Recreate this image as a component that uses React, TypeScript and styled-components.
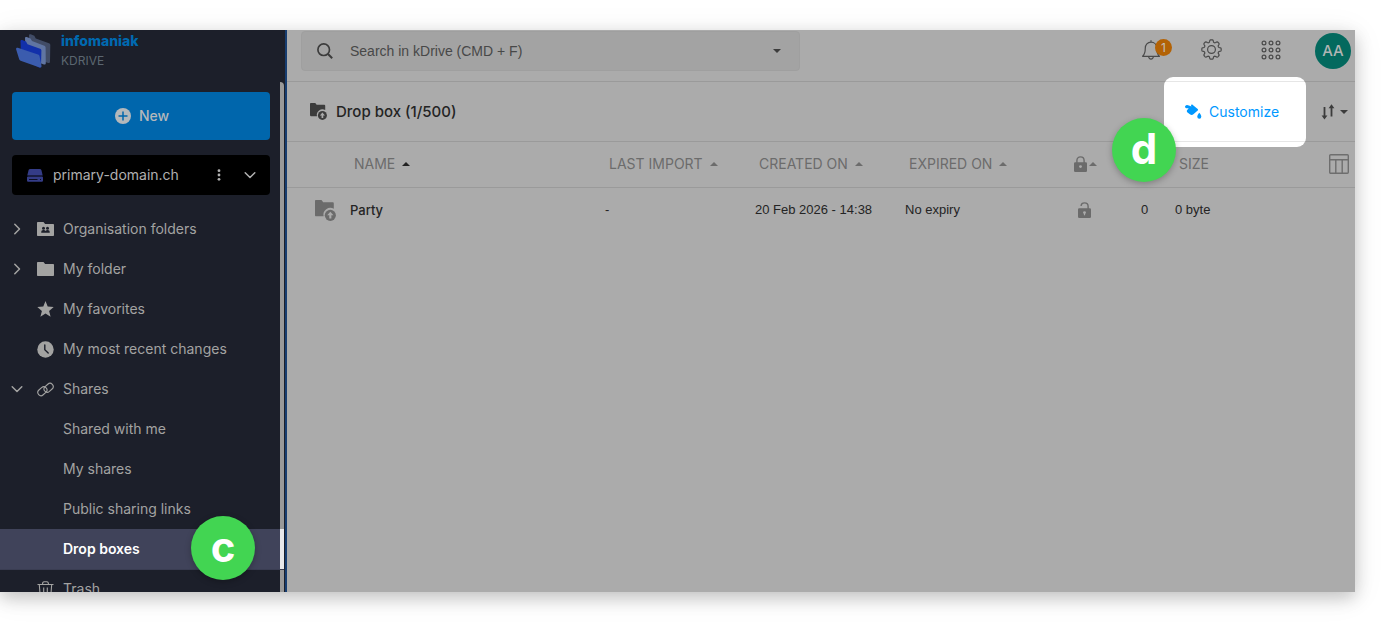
import React from "react";
import styled, { createGlobalStyle } from "styled-components";

const Global = createGlobalStyle`
  * { box-sizing: border-box; }
  body { margin: 0; background: #fff; font-family: Inter, "Liberation Sans", sans-serif; font-size: 14px; line-height: 20px; overflow: hidden; }
  button, input { font: inherit; color: inherit; border: 0; background: none; padding: 0; margin: 0; }
  h1, ul { margin: 0; padding: 0; list-style: none; }
  svg { display: block; flex: none; }
`;

const grotesk = '"Liberation Sans", Arial, sans-serif';

const Page = styled.div`
  min-height: 100vh;
  padding: 30px 30px 30px 0;
  background: #fff;
`;

const Frame = styled.div`
  display: flex;
  height: calc(100vh - 60px);
  min-height: 320px;
  overflow: hidden;
  background: #ababab;
`;

const Shadow = styled.div`
  box-shadow: 0 6px 16px rgba(0, 0, 0, 0.2), 0 4px 30px rgba(0, 0, 0, 0.08);
`;

const Sidebar = styled.aside`
  flex: none;
  width: 287px;
  background: #1c1f2a;
  border-right: 2px solid #173d70;
  display: flex;
  flex-direction: column;
  color: #a3a3a2;
`;

const Brand = styled.a`
  display: flex;
  align-items: center;
  gap: 10px;
  height: 52px;
  padding: 0 0 11px 16px;
  flex: none;
  text-decoration: none;
`;

const BrandText = styled.span`
  display: flex;
  flex-direction: column;
  line-height: 20px;
  color: #5b6670;
  font-size: 12px;
`;

const BrandName = styled.strong`
  color: #0069b0;
  font-size: 14px;
  font-weight: 800;
`;

const SideBody = styled.div`
  flex: none;
  width: 284px;
  border-right: 4px solid #999;
  border-top-right-radius: 4px;
  padding-top: 10px;
`;

const NewButton = styled.button`
  display: flex;
  align-items: center;
  justify-content: center;
  gap: 8px;
  width: 258px;
  height: 48px;
  margin-left: 12px;
  padding-left: 2px;
  border-radius: 4px;
  background: #0066ac;
  color: #b4b8bb;
  font-weight: 500;
`;

const DriveButton = styled.button`
  display: flex;
  align-items: center;
  width: 258px;
  height: 40px;
  margin: 15px 0 14px 12px;
  padding: 0 13px 0 15px;
  border-radius: 4px;
  background: #000;
  color: #b0b0b0;
  text-align: left;
`;

const DriveName = styled.span`
  flex: 1;
  margin-left: 10px;
`;

const DriveMore = styled.span`
  margin-right: 22px;
`;

const NavItem = styled.li<{ $active?: boolean }>`
  position: relative;
  display: grid;
  grid-template-columns: 17px 16px 1fr;
  align-items: center;
  column-gap: 10px;
  height: 40px;
  padding-left: 10px;
  margin-right: ${(p) => (p.$active ? "-4px" : "0")};
  border-right: ${(p) => (p.$active ? "4px solid #e8e8ea" : "0")};
  background: ${(p) => (p.$active ? "#40435a" : "transparent")};
  box-shadow: ${(p) => (p.$active ? "0 1px #3a3d52" : "none")};
  color: ${(p) => (p.$active ? "#fff" : "inherit")};
  font-weight: ${(p) => (p.$active ? 600 : 400)};
`;

const NavLink = styled.a`
  grid-column: 3;
  color: inherit;
  text-decoration: none;
`;

const Slot = styled.span<{ $col: number }>`
  grid-column: ${(p) => p.$col};
  grid-row: 1;
`;

const StepBadge = styled.span<{ $left: number; $top: number }>`
  position: absolute;
  z-index: 3;
  left: ${(p) => p.$left}px;
  top: ${(p) => p.$top}px;
  width: 64px;
  height: 64px;
  border-radius: 50%;
  background: #42d552;
  color: #fff;
  font-size: 42px;
  font-weight: 700;
  line-height: 62px;
  text-align: center;
  box-shadow: 0 2px 6px rgba(0, 0, 0, 0.25);
`;

const Main = styled.main`
  flex: 1;
  min-width: 0;
  display: flex;
  flex-direction: column;
  color: #242424;
`;

const TopBar = styled.header`
  display: flex;
  align-items: center;
  height: 52px;
  padding: 0 4px 10px 14px;
  border-bottom: 1px solid #9a9a9a;
`;

const Search = styled.label`
  display: flex;
  align-items: center;
  flex: 0 1 499px;
  height: 40px;
  padding: 0 18px 0 15px;
  border: 1px solid #9f9f9f;
  border-radius: 4px;
  background: #a3a3a3;
  color: #3c3c3c;
`;

const SearchInput = styled.input`
  flex: 1;
  min-width: 0;
  margin-left: 17px;
  outline: none;
  font-family: ${grotesk};
  &::placeholder { color: #484848; opacity: 1; }
`;

const Tools = styled.div`
  display: flex;
  align-items: center;
  height: 38px;
  margin-left: auto;
  color: #4a4a4a;
`;

const ToolButton = styled.button`
  position: relative;
  display: grid;
  place-items: center;
  width: 60px;
  height: 40px;
  padding-bottom: 2px;
`;

const Count = styled.span`
  position: absolute;
  top: 8px;
  left: 34px;
  width: 17px;
  height: 17px;
  border-radius: 50%;
  background: #b36205;
  color: #c4c0ba;
  font-size: 12px;
  line-height: 17px;
  text-align: center;
`;

const Avatar = styled.button`
  width: 36px;
  height: 36px;
  margin-left: 14px;
  border-radius: 50%;
  background: #03695e;
  color: #b0b5b4;
  font-size: 15px;
  font-weight: 500;
`;

const TitleBar = styled.div`
  display: flex;
  align-items: center;
  height: 60px;
  padding: 0 7px 0 23px;
  border-bottom: 1px solid #9a9a9a;
`;

const Title = styled.h1`
  flex: 1;
  margin-left: 9px;
  font-size: 15px;
  font-weight: 500;
`;

const Spotlight = styled.div`
  position: relative;
  display: flex;
  width: 142px;
  height: 60px;
  margin-right: 15px;
  &::before {
    content: "";
    position: absolute;
    inset: -5px 0;
    border-radius: 9px;
    background: linear-gradient(#e6e6e6, #e6e6e6) 0 4px / 100% 1px no-repeat,
      linear-gradient(#e6e6e6, #e6e6e6) 0 64px / 100% 1px no-repeat, #fff;
  }
`;

const Customize = styled.button`
  position: relative;
  flex: 1;
  display: flex;
  align-items: center;
  padding-left: 21px;
  gap: 7px;
  color: #0098ff;
`;

const SortButton = styled.button`
  display: flex;
  align-items: center;
  gap: 5px;
  color: #3c3c3c;
`;

const Table = styled.table`
  width: 100%;
  table-layout: fixed;
  border-collapse: collapse;
`;

const Col = styled.col<{ $w?: number }>`
  width: ${(p) => (p.$w ? p.$w + "px" : "auto")};
`;

const Th = styled.th<{ $left?: number }>`
  height: 45px;
  padding: 0 0 0 ${(p) => p.$left ?? 14}px;
  border-bottom: 1px solid #9a9a9a;
  color: #6c6c6c;
  font-weight: 400;
  text-align: left;
  white-space: nowrap;
`;

const SortHead = styled.button<{ $gap?: number }>`
  display: flex;
  align-items: center;
  gap: ${(p) => p.$gap ?? 7}px;
`;

const ColumnsButton = styled.button`
  display: block;
`;

const Td = styled.td<{ $left?: number; $strong?: boolean }>`
  height: 46px;
  padding: 0 0 0 ${(p) => p.$left ?? 10}px;
  font-family: ${(p) => (p.$strong ? "Inter, sans-serif" : grotesk)};
  font-size: 13px;
  font-weight: ${(p) => (p.$strong ? 500 : 400)};
  white-space: nowrap;
`;

const FileCell = styled.span`
  display: flex;
  align-items: center;
  gap: 14px;
`;

const Caret = ({ up, color = "currentColor" }: { up?: boolean; color?: string }) => (
  <svg width="8" height="4" viewBox="0 0 8 4" fill={color} aria-hidden>
    <path d={up ? "M0 4 4 0l4 4z" : "M0 0h8L4 4z"} />
  </svg>
);

const Chevron = ({ down }: { down?: boolean }) => (
  <svg width="14" height="14" viewBox="0 0 14 14" fill="none" stroke="currentColor" strokeWidth="1.5" strokeLinecap="round" strokeLinejoin="round" aria-hidden>
    <path d={down ? "M2.2 4.7 7 9.5l4.8-4.8" : "M4.8 2.2 9.5 7l-4.7 4.8"} />
  </svg>
);

const BrandIcon = () => (
  <svg width="35" height="34" viewBox="0 0 35 34" aria-hidden>
    <path fill="#414c66" d="M13 1.500c0-1 .8-1.600 1.700-1.200l3.600 1.400 1.500 2.700L33 9.200c.8.300 1.300 1 1.300 1.800L34 27.500c0 1.200-.8 1.800-1.900 1.500L14 22z" />
    <path fill="#6075a2" d="M9 4.200c0-1 .8-1.500 1.700-1.200l3.800 1.400 1.500 2.700 12.300 4.600c.8.300 1.300 1 1.300 1.800l.2 15.500c0 1.200-.8 1.900-1.900 1.500L10 24z" />
    <path fill="#1230aa" d="M4.500 7.300c0-1 .8-1.500 1.700-1.200l3.800 1.400 1.500 2.800 12.600 4.400c.8.300 1.300 1 1.300 1.800L25 32c0 1.200-.8 1.900-1.900 1.500L5 24z" />
    <path fill="#3b5cae" d="M.1 15.200c-.2-1.100.7-1.800 1.700-1.500l20.200 6.700c.8.300 1.300.8 1.500 1.600l2 9.800c.2 1.200-.7 2-1.800 1.600L4.600 26.700c-.8-.3-1.300-.8-1.500-1.600z" />
  </svg>
);

const PlusIcon = () => (
  <svg width="16" height="16" viewBox="0 0 16 16" aria-hidden>
    <circle cx="8" cy="8" r="8" fill="currentColor" />
    <path d="M8 3.500v9M3.500 8h9" stroke="#0066ac" strokeWidth="1.500" />
  </svg>
);

const DriveIcon = () => (
  <svg width="16" height="13" viewBox="0 0 16 13" fill="#343c87" aria-hidden>
    <path d="M3.300 0h9.400c.8 0 1.400.4 1.700 1.100L15.700 6.600H.3l1.300-5.500C1.900.4 2.500 0 3.300 0z" />
    <path fillRule="evenodd" d="M1.300 7.400h13.400c.7 0 1.300.5 1.300 1.200v2.900c0 .8-.7 1.300-1.300 1.300H1.300C.7 12.800 0 12.300 0 11.500V8.600C0 7.900.6 7.400 1.300 7.400zM2 10v.8h8.500V10zm11 0v.8h1V10z" />
  </svg>
);

const FolderIcon = ({ people }: { people?: boolean }) => (
  <svg width="17" height="14" viewBox="0 0 17 14" aria-hidden>
    <path fill="currentColor" d="M1 0h5.500l1.600 2H16c.6 0 1 .4 1 1v10c0 .6-.4 1-1 1H1c-.6 0-1-.4-1-1V1c0-.6.4-1 1-1z" />
    {people && (
      <g fill="#1c1f2a">
        <circle cx="6.500" cy="6.200" r="1.500" />
        <circle cx="10.500" cy="6.200" r="1.500" />
        <path d="M4.200 10.800c0-2 .8-2.700 2.200-2.700 1 0 1.600.2 2.100.8.500-.6 1.100-.8 2.100-.8 1.400 0 2.200.7 2.200 2.700z" />
      </g>
    )}
  </svg>
);

const StarIcon = () => (
  <svg width="17" height="16" viewBox="0 0 17 16" fill="currentColor" aria-hidden>
    <path d="M8.500 0l2.200 5.600 6 .4-4.600 3.900 1.500 5.900-5.100-3.300-5.100 3.300 1.500-5.900L.3 6l6-.4z" />
  </svg>
);

const ClockIcon = () => (
  <svg width="17" height="17" viewBox="0 0 17 17" aria-hidden>
    <circle cx="8.500" cy="8.500" r="8.200" fill="currentColor" />
    <path d="M7.800 4v4.700l3.400 3.200" fill="none" stroke="#1c1f2a" strokeWidth="1.400" strokeLinecap="round" />
  </svg>
);

const LinkIcon = () => (
  <svg width="17" height="17" viewBox="0 0 17 17" fill="none" stroke="currentColor" strokeWidth="1.100" aria-hidden>
    <rect x="-5" y="-3.200" width="10" height="6.400" rx="3.200" transform="translate(5.400 10.200) rotate(-42)" />
    <rect x="-5" y="-3.200" width="10" height="6.400" rx="3.200" transform="translate(11.600 6.800) rotate(-42)" />
  </svg>
);

const TrashIcon = () => (
  <svg width="17" height="17" viewBox="0 0 17 17" fill="none" stroke="currentColor" strokeWidth="1.100" aria-hidden>
    <path d="M.5 3.500h16M5.500 3.500c0-2 .6-2.800 1.600-2.800h2.800c1 0 1.600.8 1.600 2.800M2.300 3.500l1 12.800h10.400l1-12.800M6.700 6.500v7M10.300 6.500v7" />
  </svg>
);

const SearchIcon = () => (
  <svg width="16" height="16" viewBox="0 0 16 16" fill="none" stroke="currentColor" strokeWidth="1.700" aria-hidden>
    <circle cx="6.700" cy="6.700" r="5.800" />
    <path d="M11 11l4.200 4.200" strokeWidth="2" />
  </svg>
);

const BellIcon = () => (
  <svg width="18" height="20" viewBox="0 0 18 20" fill="none" stroke="currentColor" strokeWidth="1.200" strokeLinejoin="round" aria-hidden>
    <path d="M9 .3v1.800M9 2.100c3.500 0 5.700 2.600 5.700 6 0 4.500 1 6.700 2.700 8.200H.6c1.700-1.500 2.700-3.700 2.700-8.200 0-3.400 2.200-6 5.700-6zM6.600 16.500c.2 1.800 1.100 2.600 2.400 2.600s2.200-.8 2.400-2.600" />
  </svg>
);

/* Eight rounded teeth traced around the circle. */
const gearOutline =
  Array.from({ length: 128 }, (_, i) => {
    const a = (i / 128) * Math.PI * 2;
    const r = 8.500 + 1.200 * Math.tanh(2 * Math.cos(8 * a) + 0.4);
    return `${i ? "L" : "M"}${(10.5 + r * Math.sin(a)).toFixed(2)} ${(10.5 - r * Math.cos(a)).toFixed(2)}`;
  }).join("") + "z";

const GearIcon = () => (
  <svg width="21" height="21" viewBox="0 0 21 21" fill="none" stroke="currentColor" strokeWidth="1.200" strokeLinejoin="round" aria-hidden>
    <path d={gearOutline} />
    <circle cx="10.500" cy="10.500" r="3.900" />
  </svg>
);

const AppsIcon = () => (
  <svg width="20" height="20" viewBox="0 0 20 20" fill="none" stroke="currentColor" strokeWidth="1.200" aria-hidden>
    {[3, 10, 17].map((y) => [3, 10, 17].map((x) => <circle key={x + "-" + y} cx={x} cy={y} r="1.900" />))}
  </svg>
);

const DropFolderIcon = ({ size, color }: { size: number; color: string }) => (
  <svg width={size} height={size} viewBox="0 0 20 20" aria-hidden>
    <path fill={color} d="M1 0h5.200l1.600 2.200h9c.7 0 1.100.5 1.100 1.100V8.300A6.600 6.600 0 0 0 8.200 15.500H1c-.6 0-1-.4-1-1V1c0-.6.4-1 1-1z" />
    <circle cx="14.600" cy="14.600" r="5.300" fill={color} />
    <path fill="#ababab" d="M14.600 11.300l3 3.300h-2v3h-2v-3h-2z" />
  </svg>
);

const BucketIcon = () => (
  <svg width="17" height="15" viewBox="0 0 17 15" fill="currentColor" aria-hidden>
    <path d="M.3 1.900C1 .8 2.500.7 3.900 1.500l2.500.9-.5-1.300c.5-.8 1.300-.8 1.900-.2l4.900 4c.5.500.5 1 0 1.500L8.400 10.200c-.9.900-2.200 1-3.200.3L2.500 8.400c-.9-.8-.9-1.600-.3-2.400l1.500-1.700C2.400 4.400 1 4.300.3 3.500c-.4-.5-.4-1.100 0-1.600z" />
    <path d="M14.300 8.800c1.200 1.600 2 2.700 2 3.900a2 2 0 0 1-4 0c0-1.200.8-2.300 2-3.900z" />
  </svg>
);

const SortIcon = () => (
  <svg width="14" height="16" viewBox="0 0 14 16" fill="currentColor" aria-hidden>
    <path d="M2.600 3h1.800v8.600h2L3.500 15.600.6 11.600h2zM9.600 12.500V4.200h-2L10.500.2l2.900 4h-2v8.300z" />
  </svg>
);

const LockIcon = ({ open }: { open?: boolean }) => (
  <svg width="13" height="16" viewBox="0 0 13 16" aria-hidden>
    <path d={open ? "M3 3.800C3.300 1.900 4.700.9 6.500.9c2.200 0 3.600 1.400 3.600 3.400V7" : "M2.900 7V4.500C2.900 2.300 4.300.9 6.500.9s3.600 1.400 3.600 3.600V7"} fill="none" stroke="#6b6b6b" strokeWidth="1.400" />
    <rect y="6.200" width="13" height="9.800" rx="1.200" fill="#6b6b6b" />
    <circle cx="6.500" cy="10.600" r="1.400" fill="#ababab" />
    {open && <path d="M6.500 10.500v2.800" stroke="#ababab" strokeWidth="1.200" />}
  </svg>
);

const ColumnsIcon = () => (
  <svg width="20" height="20" viewBox="0 0 20 20" fill="none" stroke="#6e6e6e" strokeWidth="1.400" aria-hidden>
    <rect x=".7" y=".7" width="18.600" height="18.600" rx="1" />
    <path d="M.7 5.800h18.600M6.800 5.800v13.500M13.200 5.800v13.500" />
  </svg>
);

const items: { label: string; icon?: React.ReactNode; chevron?: "right" | "down"; active?: boolean }[] = [
  { label: "Organisation folders", icon: <FolderIcon people />, chevron: "right" },
  { label: "My folder", icon: <FolderIcon />, chevron: "right" },
  { label: "My favorites", icon: <StarIcon /> },
  { label: "My most recent changes", icon: <ClockIcon /> },
  { label: "Shares", icon: <LinkIcon />, chevron: "down" },
  { label: "Shared with me" },
  { label: "My shares" },
  { label: "Public sharing links" },
  { label: "Drop boxes", active: true },
  { label: "Trash", icon: <TrashIcon /> },
];

export default function App() {
  return (
    <Page>
      <Global />
      <Shadow>
        <Frame>
          <Sidebar>
            <Brand href="#">
              <BrandIcon />
              <BrandText>
                <BrandName>infomaniak</BrandName>
                KDRIVE
              </BrandText>
            </Brand>
            <SideBody>
              <NewButton><PlusIcon />New</NewButton>
              <DriveButton>
                <DriveIcon />
                <DriveName>primary-domain.ch</DriveName>
                <DriveMore>
                  <svg width="4" height="12" viewBox="0 0 4 12" fill="currentColor" aria-hidden>
                    <circle cx="2" cy="1.700" r="1.400" /><circle cx="2" cy="6" r="1.400" /><circle cx="2" cy="10.300" r="1.400" />
                  </svg>
                </DriveMore>
                <Chevron down />
              </DriveButton>
              <nav>
                <ul>
                  {items.map((it) => (
                    <NavItem key={it.label} $active={it.active}>
                      {it.chevron && <Slot $col={1}><Chevron down={it.chevron === "down"} /></Slot>}
                      {it.icon && <Slot $col={2}>{it.icon}</Slot>}
                      <NavLink href="#">{it.label}</NavLink>
                      {it.active && <StepBadge $left={191} $top={-13}>c</StepBadge>}
                    </NavItem>
                  ))}
                </ul>
              </nav>
            </SideBody>
          </Sidebar>
          <Main>
            <TopBar>
              <Search>
                <SearchIcon />
                <SearchInput type="search" placeholder="Search in kDrive (CMD + F)" aria-label="Search in kDrive" />
                <Caret />
              </Search>
              <Tools>
                <ToolButton aria-label="Notifications"><BellIcon /><Count>1</Count></ToolButton>
                <ToolButton aria-label="Settings"><GearIcon /></ToolButton>
                <ToolButton aria-label="Applications"><AppsIcon /></ToolButton>
                <Avatar>AA</Avatar>
              </Tools>
            </TopBar>
            <TitleBar>
              <DropFolderIcon size={17} color="#3c3c3c" />
              <Title>Drop box (1/500)</Title>
              <Spotlight>
                <Customize><BucketIcon />Customize</Customize>
                <StepBadge $left={-52} $top={36}>d</StepBadge>
              </Spotlight>
              <SortButton aria-label="Sort"><SortIcon /><Caret /></SortButton>
            </TitleBar>
            <Table>
              <colgroup>
                <Col /><Col $w={150} /><Col $w={150} /><Col $w={160} /><Col $w={60} /><Col $w={50} /><Col $w={150} /><Col $w={40} />
              </colgroup>
              <thead>
                <tr>
                  <Th $left={67}><SortHead>NAME<Caret up color="#222" /></SortHead></Th>
                  <Th><SortHead>LAST IMPORT<Caret up /></SortHead></Th>
                  <Th><SortHead>CREATED ON<Caret up /></SortHead></Th>
                  <Th><SortHead>EXPIRED ON<Caret up /></SortHead></Th>
                  <Th $left={19}><SortHead $gap={2} aria-label="Protection"><LockIcon /><Caret up /></SortHead></Th>
                  <Th />
                  <Th>SIZE</Th>
                  <Th><ColumnsButton aria-label="Columns"><ColumnsIcon /></ColumnsButton></Th>
                </tr>
              </thead>
              <tbody>
                <tr>
                  <Td $left={28} $strong><FileCell><DropFolderIcon size={21} color="#6b6b6b" />Party</FileCell></Td>
                  <Td>-</Td>
                  <Td>20 Feb 2026 - 14:38</Td>
                  <Td>No expiry</Td>
                  <Td $left={23}><LockIcon open /></Td>
                  <Td $left={26}>0</Td>
                  <Td>0 byte</Td>
                  <Td />
                </tr>
              </tbody>
            </Table>
          </Main>
        </Frame>
      </Shadow>
    </Page>
  );
}
